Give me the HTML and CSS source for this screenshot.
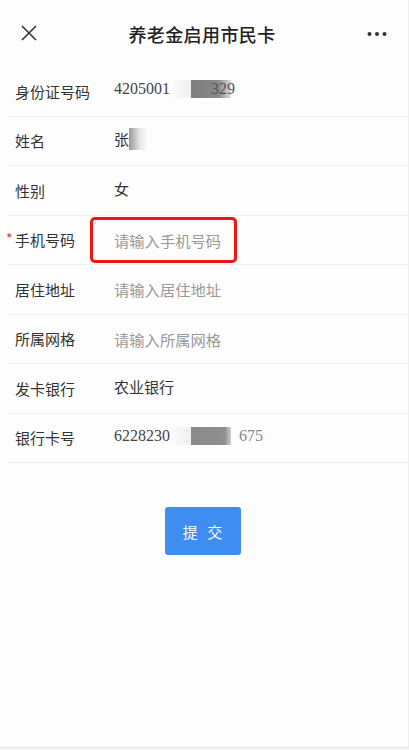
FILE: index.html
```html
<!DOCTYPE html>
<html>
<head>
    <meta charset="UTF-8">
    <meta name="viewport" content="width=device-width, initial-scale=1.0">
    <title>养老金启用市民卡</title>
    <link rel="stylesheet" href="styles.css">
</head>
<body>
    <div class="page">
        <!-- Top bar -->
        <div class="topbar">
            <span class="close">
                <svg width="16" height="16" viewBox="0 0 16 16"><path d="M1 1 L15 15 M15 1 L1 15" stroke="#333" stroke-width="1.6" fill="none"/></svg>
            </span>
            <h1 class="title">养老金启用市民卡</h1>
            <span class="more">
                <svg width="20" height="6" viewBox="0 0 20 6"><circle cx="2.5" cy="3" r="2" fill="#333"/><circle cx="10" cy="3" r="2" fill="#333"/><circle cx="17.5" cy="3" r="2" fill="#333"/></svg>
            </span>
        </div>

        <!-- Form -->
        <div class="form">
            <div class="row">
                <span class="label">身份证号码</span>
                <span class="value num">4205001<span class="blur-light w20"></span><span class="blur-dark w40"></span><span class="tail">329</span></span>
            </div>
            <div class="row">
                <span class="label">姓名</span>
                <span class="value">张<span class="blur-fade"></span></span>
            </div>
            <div class="row">
                <span class="label">性别</span>
                <span class="value">女</span>
            </div>
            <div class="row">
                <span class="label"><i class="star">*</i>手机号码</span>
                <span class="value placeholder boxed">请输入手机号码</span>
            </div>
            <div class="row">
                <span class="label">居住地址</span>
                <span class="value placeholder">请输入居住地址</span>
            </div>
            <div class="row">
                <span class="label">所属网格</span>
                <span class="value placeholder">请输入所属网格</span>
            </div>
            <div class="row">
                <span class="label">发卡银行</span>
                <span class="value">农业银行</span>
            </div>
            <div class="row">
                <span class="label">银行卡号</span>
                <span class="value num">6228230<span class="blur-light w20"></span><span class="blur-dark w40 solid"></span><span class="tail faded">675</span></span>
            </div>
        </div>

        <div class="actions">
            <button class="submit">提 交</button>
        </div>
    </div>
    <div class="bottom"></div>
</body>
</html>
```

FILE: styles.css
```css
body {
    margin: 0;
    background-color: #fdfdfd;
    font-family: "Noto Sans CJK SC", "Noto Sans", sans-serif;
    color: #333;
}
.page {
    height: 747px;
    border-right: 1px solid #eee;
    box-sizing: border-box;
}
.topbar {
    height: 67px;
    display: flex;
    align-items: center;
    justify-content: space-between;
    padding: 0 21px 0 21px;
}
.close {
    width: 16px;
    height: 16px;
    display: flex;
    margin-top: -1px;
}
.more {
    display: flex;
    width: 20px;
}
.title {
    margin: 0;
    font-size: 18px;
    font-weight: 500;
    color: #222;
    letter-spacing: 0.4px;
}
.form {
    padding-left: 8px;
}
.row {
    height: 48.5px;
    display: flex;
    align-items: center;
    border-bottom: 1px solid #eeeeee;
}
.label {
    width: 106px;
    box-sizing: border-box;
    padding-left: 7px;
    font-size: 15px;
    color: #333;
    position: relative;
}
.star {
    position: absolute;
    left: -2px;
    top: -1px;
    color: #d33;
    font-style: normal;
    font-size: 14px;
}
.value {
    font-size: 15px;
    color: #333;
    display: flex;
    align-items: center;
    margin-top: -4px;
}
.value.num {
    font-family: "Liberation Serif", serif;
    font-size: 16px;
    color: #444;
}
.placeholder {
    color: #999;
    margin-top: 0;
    font-size: 15.3px;
}
.boxed {
    margin-left: -24px;
    width: 120px;
    height: 40px;
    padding-left: 21px;
    border: 3px solid #f01515;
    border-radius: 5px;
}
.blur-light {
    display: inline-block;
    height: 18px;
    background: linear-gradient(90deg, #fbfbfb, #efefef);
    margin-left: 2px;
}
.blur-dark {
    display: inline-block;
    height: 18px;
    background: linear-gradient(90deg, #7d7d7d, #8a8a8a 70%, #e0e0e0);
}
.blur-dark.solid {
    background: linear-gradient(90deg, #8a8a8a, #909090 85%, #cfcfcf);
}
.w20 {
    width: 19px;
}
.w40 {
    width: 40px;
}
.tail {
    margin-left: -20px;
    color: #555;
    position: relative;
}
.tail.faded {
    margin-left: 0;
    padding-left: 8px;
    color: #888;
}
.blur-fade {
    display: inline-block;
    width: 18px;
    height: 22px;
    background: linear-gradient(90deg, #999, #e6e6e6 60%, #fafafa);
}
.actions {
    display: flex;
    justify-content: center;
    padding-top: 44px;
    padding-right: 3px;
}
.submit {
    width: 76px;
    height: 48px;
    background-color: #3e8df1;
    border: none;
    border-radius: 3px;
    color: #fff;
    font-family: "Noto Sans CJK SC", sans-serif;
    font-size: 15px;
    letter-spacing: 3px;
    padding: 0 0 0 3px;
}
.bottom {
    height: 3px;
    border-top: 1px solid #e8e8e8;
    background-color: #f3f3f3;
}
```
